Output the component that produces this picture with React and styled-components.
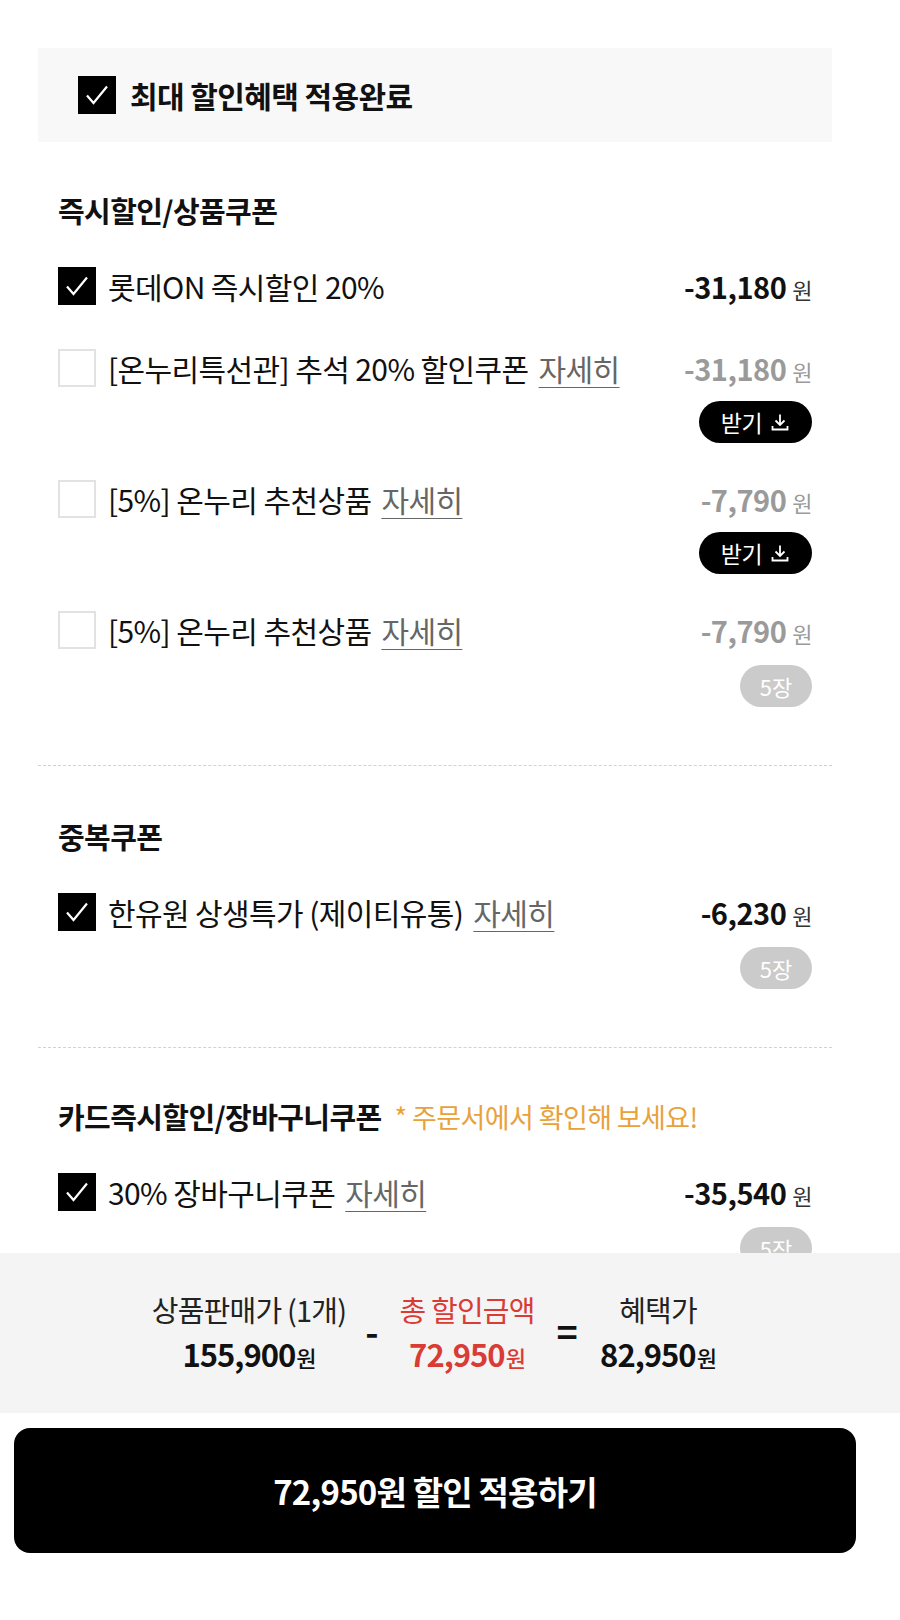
import React from "react";
import styled, { createGlobalStyle } from "styled-components";

const GlobalStyle = createGlobalStyle`
  body {
    margin: 0;
    background: #fff;
    font-family: "Noto Sans CJK KR", "Noto Sans", sans-serif;
    color: #111;
  }
`;

const Page = styled.div`
  width: 900px;
  height: 1620px;
  display: flex;
  flex-direction: column;
  overflow: hidden;
`;

const Scroll = styled.div`
  height: 1253px;
  overflow: hidden;
  padding: 48px 0 0 38px;
  box-sizing: border-box;
`;

const Content = styled.div`
  width: 794px;
`;

const MaxBox = styled.div`
  height: 94px;
  background: #f8f8f8;
  display: flex;
  align-items: center;
  gap: 14px;
  padding-left: 40px;
`;

const MaxText = styled.span`
  font-size: 30px;
  font-weight: 700;
  letter-spacing: -0.6px;
`;

const Section = styled.section`
  padding: ${p => p.$top}px 20px 58px;
  border-bottom: ${p => (p.$last ? "none" : "1px dashed #d2d2d2")};
`;

const SectionTitle = styled.h2`
  margin: 0 0 36px;
  height: 40px;
  display: flex;
  align-items: center;
  gap: 13px;
  font-size: 29px;
  font-weight: 700;
  letter-spacing: -0.6px;
`;

const Note = styled.span`
  font-size: 27px;
  font-weight: 400;
  letter-spacing: -0.6px;
  color: #e9a13b;
`;

const List = styled.div`
  display: flex;
  flex-direction: column;
  gap: 36px;
`;

const Item = styled.div`
  display: flex;
  flex-direction: column;
  padding-bottom: ${p => (p.$plain ? 6 : 0)}px;
`;

const Line = styled.div`
  height: 40px;
  display: flex;
  align-items: center;
`;

const Box = styled.span`
  width: 38px;
  height: 38px;
  flex: none;
  box-sizing: border-box;
  display: flex;
  align-items: center;
  justify-content: center;
  background: ${p => (p.$on ? "#000" : "#fff")};
  border: ${p => (p.$on ? "none" : "2px solid #e2e2e2")};
`;

const Label = styled.span`
  margin-left: 12px;
  font-size: 30px;
  letter-spacing: -0.6px;
  flex: 1;
  white-space: nowrap;
`;

const More = styled.span`
  margin-left: 10px;
  color: #666;
  text-decoration: underline;
  text-underline-offset: 6px;
  text-decoration-thickness: 1px;
`;

const Price = styled.span`
  font-size: 29px;
  font-weight: 700;
  letter-spacing: -0.5px;
  color: ${p => (p.$on ? "#111" : "#9a9a9a")};
`;

const Won = styled.span`
  margin-left: 6px;
  font-size: 22px;
  font-weight: 400;
  color: ${p => (p.$on ? "#333" : "#9a9a9a")};
`;

const Action = styled.div`
  margin-top: ${p => p.$mt}px;
  display: flex;
  justify-content: flex-end;
`;

const GetButton = styled.button`
  height: 42px;
  width: 113px;
  border: none;
  border-radius: 21px;
  background: #000;
  color: #fff;
  font-family: inherit;
  font-size: 23px;
  letter-spacing: -0.5px;
  display: flex;
  align-items: center;
  justify-content: center;
  gap: 8px;
  padding: 0;
`;

const CountBadge = styled.span`
  height: 42px;
  width: 72px;
  border-radius: 21px;
  background: #cbcbcb;
  color: #fff;
  font-size: 22px;
  display: flex;
  align-items: center;
  justify-content: center;
`;

const Summary = styled.div`
  height: 160px;
  background: #f4f4f4;
  display: flex;
  align-items: center;
  padding-left: 139px;
`;

const Col = styled.div`
  display: flex;
  flex-direction: column;
  align-items: center;
  width: ${p => p.$w}px;
  flex: none;
`;

const ColLabel = styled.span`
  font-size: 29px;
  letter-spacing: -0.8px;
  line-height: 44px;
  white-space: nowrap;
  color: ${p => p.$c || "#222"};
`;

const ColAmount = styled.span`
  font-size: 31px;
  font-weight: 700;
  letter-spacing: -1px;
  line-height: 46px;
  white-space: nowrap;
  color: ${p => p.$c || "#111"};
  small {
    font-size: 22px;
    font-weight: 500;
    margin-left: 1px;
  }
`;

const Op = styled.span`
  width: ${p => p.$w}px;
  flex: none;
  text-align: center;
  font-size: 36px;
  font-weight: 700;
  margin-top: -6px;
`;

const ApplyButton = styled.button`
  margin: 15px 44px 0 14px;
  height: 125px;
  border: none;
  border-radius: 16px;
  background: #000;
  color: #fff;
  font-family: inherit;
  font-size: 33px;
  font-weight: 700;
  letter-spacing: -0.8px;
`;

const Check = ({ size = 26 }) => (
  <svg width={size} height={size} viewBox="0 0 26 26" fill="none">
    <polyline points="3,13.5 9.5,21 23,4.5" stroke="#fff" strokeWidth="2.2" strokeLinejoin="miter" />
  </svg>
);

const DownIcon = () => (
  <svg width="20" height="20" viewBox="0 0 20 20" fill="none" stroke="#fff" strokeWidth="1.8">
    <path d="M10 2.5v10.5" />
    <path d="M5.5 8.5l4.5 4.5 4.5-4.5" />
    <path d="M2.5 14v3.5h15V14" />
  </svg>
);

const coupons1 = [
  { on: true, label: "롯데ON 즉시할인 20%", price: "-31,180" },
  { on: false, label: "[온누리특선관] 추석 20% 할인쿠폰", more: true, price: "-31,180", action: "get" },
  { on: false, label: "[5%] 온누리 추천상품", more: true, price: "-7,790", action: "get" },
  { on: false, label: "[5%] 온누리 추천상품", more: true, price: "-7,790", action: "count" },
];

const coupons2 = [
  { on: true, label: "한유원 상생특가 (제이티유통)", more: true, price: "-6,230", action: "count" },
];

const coupons3 = [
  { on: true, label: "30% 장바구니쿠폰", more: true, price: "-35,540", action: "count" },
];

function CouponItem({ c }) {
  return (
    <Item $plain={!c.action}>
      <Line>
        <Box $on={c.on}>{c.on && <Check />}</Box>
        <Label>
          {c.label}
          {c.more && <More>자세히</More>}
        </Label>
        <Price $on={c.on}>
          {c.price}
          <Won $on={c.on}>원</Won>
        </Price>
      </Line>
      {c.action === "get" && (
        <Action $mt={13}>
          <GetButton>
            받기 <DownIcon />
          </GetButton>
        </Action>
      )}
      {c.action === "count" && (
        <Action $mt={15}>
          <CountBadge>5장</CountBadge>
        </Action>
      )}
    </Item>
  );
}

export default function App() {
  return (
    <Page>
      <GlobalStyle />
      <Scroll>
        <Content>
          <MaxBox>
            <Box $on>
              <Check />
            </Box>
            <MaxText>최대 할인혜택 적용완료</MaxText>
          </MaxBox>

          <Section $top={48}>
            <SectionTitle>즉시할인/상품쿠폰</SectionTitle>
            <List>
              {coupons1.map((c, i) => (
                <CouponItem key={i} c={c} />
              ))}
            </List>
          </Section>

          <Section $top={50}>
            <SectionTitle>중복쿠폰</SectionTitle>
            <List>
              {coupons2.map((c, i) => (
                <CouponItem key={i} c={c} />
              ))}
            </List>
          </Section>

          <Section $top={48} $last>
            <SectionTitle>
              카드즉시할인/장바구니쿠폰
              <Note>* 주문서에서 확인해 보세요!</Note>
            </SectionTitle>
            <List>
              {coupons3.map((c, i) => (
                <CouponItem key={i} c={c} />
              ))}
            </List>
          </Section>
        </Content>
      </Scroll>

      <Summary>
        <Col $w={220}>
          <ColLabel>상품판매가 (1개)</ColLabel>
          <ColAmount>
            155,900<small>원</small>
          </ColAmount>
        </Col>
        <Op $w={26}>-</Op>
        <Col $w={164}>
          <ColLabel $c="#d93b35">총 할인금액</ColLabel>
          <ColAmount $c="#d93b35">
            72,950<small>원</small>
          </ColAmount>
        </Col>
        <Op $w={36}>=</Op>
        <Col $w={146}>
          <ColLabel>혜택가</ColLabel>
          <ColAmount>
            82,950<small>원</small>
          </ColAmount>
        </Col>
      </Summary>

      <ApplyButton>72,950원 할인 적용하기</ApplyButton>
    </Page>
  );
}
